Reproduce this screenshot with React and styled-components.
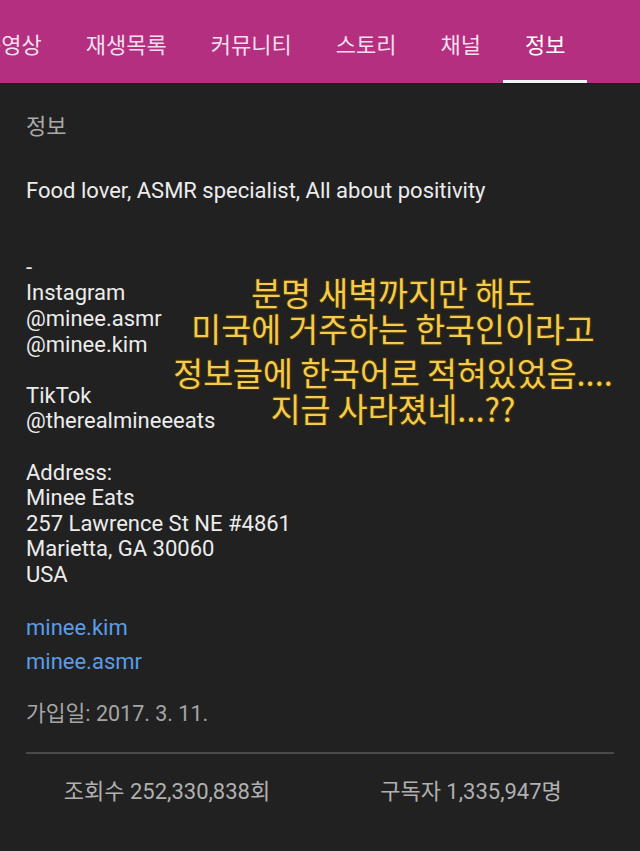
import styled, { createGlobalStyle } from "styled-components"

const Global = createGlobalStyle`
  body {
    margin: 0;
    background: #212121;
    font-family: Roboto, "Noto Sans CJK KR", sans-serif;
  }
`

const Page = styled.div`
  position: relative;
  width: 640px;
  height: 851px;
  overflow: hidden;
  background: #212121;
`

const TabBar = styled.div`
  height: 84px;
  background: #b52f80;
  overflow: hidden;
  border-bottom: 1px solid #1a1a1a;
  box-sizing: border-box;
`

const TabRow = styled.div`
  display: flex;
  height: 100%;
  margin-left: -41px;
`

const Tab = styled.div`
  display: flex;
  align-items: center;
  padding: 6px 22px 0;
  height: 100%;
  box-sizing: border-box;
  font-size: 22px;
  font-weight: 400;
  color: ${(p) => (p.$active ? "#ffffff" : "#f3dfeb")};
  white-space: nowrap;
  border-bottom: 3px solid ${(p) => (p.$active ? "#f4f4f4" : "transparent")};
`

const Content = styled.div`
  padding: 0 26px;
  display: flex;
  flex-direction: column;
`

const Heading = styled.div`
  margin-top: 30px;
  font-size: 22px;
  line-height: 26px;
  color: #a9a9a9;
`

const Description = styled.div`
  margin-top: 38px;
  font-size: 22px;
  line-height: 25.6px;
  color: #ececec;
  white-space: pre-wrap;
`

const Links = styled.div`
  margin-top: 23px;
  display: flex;
  flex-direction: column;
`

const LinkText = styled.a`
  font-size: 22px;
  line-height: 34px;
  color: #5b9ce8;
  text-decoration: none;
`

const Joined = styled.div`
  margin-top: 22px;
  font-size: 21.5px;
  line-height: 26px;
  color: #a5a5a5;
`

const Divider = styled.div`
  margin-top: 25px;
  height: 2px;
  background: #4a4a4a;
`

const Stats = styled.div`
  margin-top: 25px;
  display: grid;
  grid-template-columns: 1fr 1fr;
`

const Stat = styled.div`
  text-align: center;
  font-size: 22px;
  line-height: 26px;
  color: #b0b0b0;
  transform: translateX(${(p) => p.$shift || 0}px);
`

const Caption = styled.div`
  position: absolute;
  top: 274px;
  left: 133px;
  width: 520px;
  text-align: center;
  font-family: "Noto Sans CJK KR", sans-serif;
  font-size: 32.5px;
  line-height: 35.5px;
  color: #f3cb4e;
  text-shadow: 1px 1px 0 #3b2c05, -1px -1px 0 #3b2c05, 1px -1px 0 #3b2c05,
    -1px 1px 0 #3b2c05, 0 1px 0 #3b2c05, 0 -1px 0 #3b2c05, 1px 0 0 #3b2c05,
    -1px 0 0 #3b2c05;
`

const CaptionBlock = styled.div`
  margin-top: ${(p) => p.$gap || 0}px;
`

const tabs = ["동영상", "재생목록", "커뮤니티", "스토리", "채널", "정보"]

const description = `Food lover, ASMR specialist, All about positivity


-
Instagram
@minee.asmr
@minee.kim

TikTok
@therealmineeeats

Address:
Minee Eats
257 Lawrence St NE #4861
Marietta, GA 30060
USA`

export default function App() {
  return (
    <>
      <Global />
      <Page>
        <TabBar>
          <TabRow>
            {tabs.map((t) => (
              <Tab key={t} $active={t === "정보"}>
                {t}
              </Tab>
            ))}
          </TabRow>
        </TabBar>
        <Content>
          <Heading>정보</Heading>
          <Description>{description}</Description>
          <Links>
            <LinkText>minee.kim</LinkText>
            <LinkText>minee.asmr</LinkText>
          </Links>
          <Joined>가입일: 2017. 3. 11.</Joined>
          <Divider />
          <Stats>
            <Stat $shift={-6}>조회수 252,330,838회</Stat>
            <Stat $shift={4}>구독자 1,335,947명</Stat>
          </Stats>
        </Content>
        <Caption>
          <CaptionBlock>
            분명 새벽까지만 해도
            <br />
            미국에 거주하는 한국인이라고
          </CaptionBlock>
          <CaptionBlock $gap={9}>
            정보글에 한국어로 적혀있었음....
            <br />
            지금 사라졌네...??
          </CaptionBlock>
        </Caption>
      </Page>
    </>
  )
}
